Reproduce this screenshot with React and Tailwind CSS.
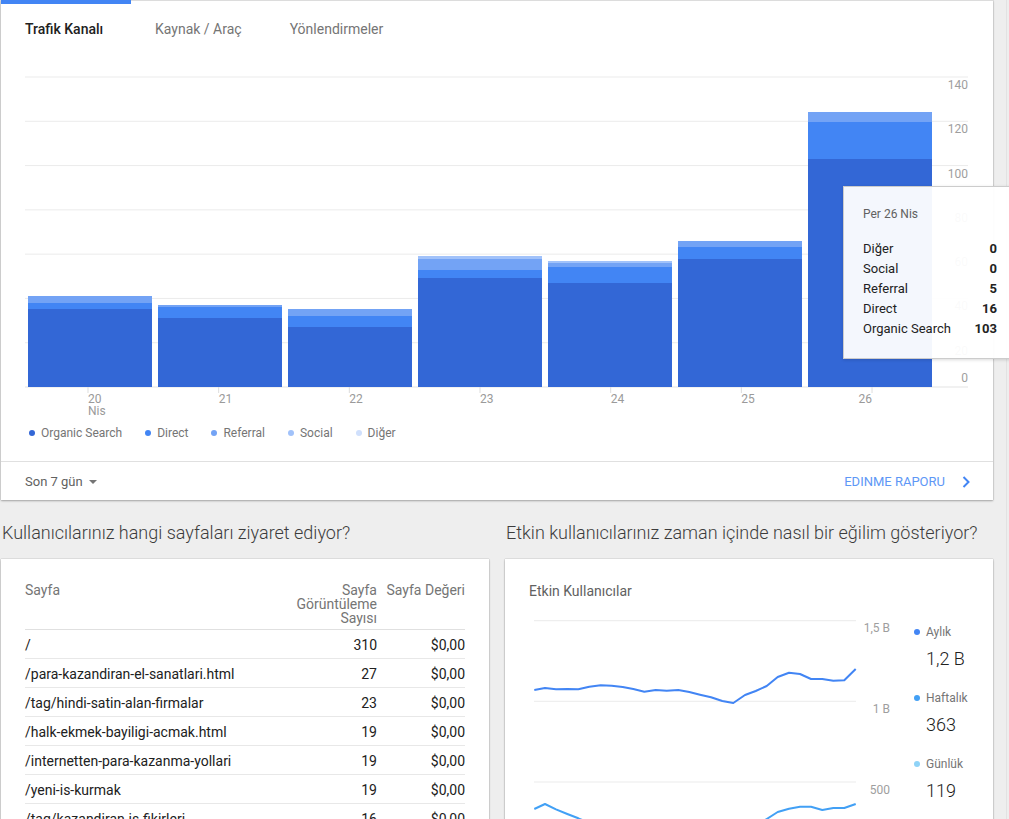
import React from "react";

const C = {
  organic: "#3367d6",
  direct: "#4285f4",
  referral: "#73a3f5",
  social: "#a1c2fa",
  diger: "#d0e0fc",
};

const segColors = [C.organic, C.direct, C.referral, C.social];

const bars = [
  [309, 303, 296],
  [318, 307, 305],
  [327, 316, 309],
  [278, 270, 259, 256],
  [283, 267, 263, 261],
  [259, 247, 241],
  [159, 122, 112],
];

const BASE = 387;
const STEP = 44.286;

function TrafficChart() {
  const grid = [0, 1, 2, 3, 4, 5, 6, 7];
  return (
    <svg width="992" height="362" className="block" fontFamily="Roboto, sans-serif">
      <g transform="translate(-1 -58)">
        {grid.map((k) => (
          <line
            key={k}
            x1="25"
            x2="968"
            y1={BASE - STEP * k}
            y2={BASE - STEP * k}
            stroke={k === 0 ? "#e3e3e3" : "#ebebeb"}
            strokeWidth="1"
          />
        ))}
        {grid.map((k) => (
          <text
            key={"l" + k}
            x="968"
            y={k === 0 ? 382 : BASE - STEP * k + 12}
            textAnchor="end"
            fontSize="12"
            fill="#9e9e9e"
          >
            {k * 20}
          </text>
        ))}
        {bars.map((tops, i) => {
          const x = 28 + 130 * i;
          return (
            <g key={i}>
              {tops.map((t, k) => {
                const bottom = k === 0 ? BASE : tops[k - 1];
                return (
                  <rect key={k} x={x} y={t} width="124" height={bottom - t} fill={segColors[k]} />
                );
              })}
            </g>
          );
        })}
        {[0, 1, 2, 3, 4, 5, 6].map((i) => (
          <line
            key={"t" + i}
            x1={88 + 130.67 * i}
            x2={88 + 130.67 * i}
            y1="387"
            y2="393"
            stroke="#dddddd"
          />
        ))}
        {["20", "21", "22", "23", "24", "25"].map((d, i) => (
          <text key={d} x={88 + 130.67 * i} y="403" fontSize="12" fill="#9a9a9a">
            {d}
          </text>
        ))}
        <text x="872" y="403" fontSize="12" fill="#9a9a9a" textAnchor="end">
          26
        </text>
        <text x="88" y="415" fontSize="12" fill="#9a9a9a">
          Nis
        </text>
      </g>
    </svg>
  );
}

function Legend() {
  const items = [
    ["Organic Search", "bg-[#3367d6]"],
    ["Direct", "bg-[#4285f4]"],
    ["Referral", "bg-[#73a3f5]"],
    ["Social", "bg-[#a1c2fa]"],
    ["Diğer", "bg-[#d0e0fc]"],
  ];
  return (
    <div className="flex items-center gap-[23px] pl-[28px] pt-[5px] pb-[20px]">
      {items.map(([t, c]) => (
        <div key={t} className="flex items-center gap-[6px]">
          <span className={"w-[6px] h-[6px] rounded-full " + c} />
          <span className="text-[12px] leading-[16px] text-[#757575]">{t}</span>
        </div>
      ))}
    </div>
  );
}

function TopCard() {
  return (
    <div className="w-[992px] bg-white shadow-[0_1px_2px_rgba(0,0,0,0.28),0_0_1px_rgba(0,0,0,0.3)]">
      <div className="flex h-[58px]">
        <div className="w-[130px] border-t-[4px] border-[#4285f4] pl-[24px] pt-[15px] text-[14px] leading-[20px] font-medium text-[#212121]">
          Trafik Kanalı
        </div>
        <div className="border-t border-[#dcdcdc] px-[24px] pt-[18px] text-[14px] leading-[20px] text-[#757575]">
          Kaynak / Araç
        </div>
        <div className="border-t border-[#dcdcdc] px-[24px] pt-[18px] text-[14px] leading-[20px] text-[#757575]">
          Yönlendirmeler
        </div>
        <div className="flex-1 border-t border-[#dcdcdc]" />
      </div>
      <TrafficChart />
      <Legend />
      <div className="flex h-[39px] items-center justify-between border-t border-[#e0e0e0] pl-[24px] pr-[23px] pt-[2px]">
        <div className="flex items-center gap-[6px] text-[13px] text-[#616161]">
          <span>Son 7 gün</span>
          <svg width="8" height="4" viewBox="0 0 8 4">
            <polygon points="0,0 8,0 4,4" fill="#757575" />
          </svg>
        </div>
        <div className="flex items-center gap-[17px]">
          <span className="text-[13px] text-[#5e97f6] uppercase">Edinme Raporu</span>
          <svg width="8" height="12" viewBox="0 0 8 12">
            <path d="M1.5 1 L6.5 6 L1.5 11" fill="none" stroke="#4285f4" strokeWidth="2" />
          </svg>
        </div>
      </div>
    </div>
  );
}

const rows = [
  ["/", "310", "$0,00"],
  ["/para-kazandiran-el-sanatlari.html", "27", "$0,00"],
  ["/tag/hindi-satin-alan-firmalar", "23", "$0,00"],
  ["/halk-ekmek-bayiligi-acmak.html", "19", "$0,00"],
  ["/internetten-para-kazanma-yollari", "19", "$0,00"],
  ["/yeni-is-kurmak", "19", "$0,00"],
  ["/tag/kazandiran-is-fikirleri", "16", "$0,00"],
];

function PagesCard() {
  return (
    <div className="h-[280px] bg-white shadow-[0_1px_2px_rgba(0,0,0,0.28),0_0_1px_rgba(0,0,0,0.3)] px-[24px] pt-[24px]">
      <div className="flex border-b border-[#e0e0e0] pb-[4px] text-[14px] leading-[14px] text-[#757575]">
        <div className="flex-1">Sayfa</div>
        <div className="w-[90px] text-right">Sayfa Görüntüleme Sayısı</div>
        <div className="w-[88px] text-right">Sayfa Değeri</div>
      </div>
      {rows.map((r, i) => (
        <div
          key={i}
          className="flex h-[29px] items-center border-b border-[#e8e8e8] pt-[2px] text-[14px] text-[#212121]"
        >
          <div className="flex-1">{r[0]}</div>
          <div className="w-[90px] text-right">{r[1]}</div>
          <div className="w-[88px] text-right">{r[2]}</div>
        </div>
      ))}
    </div>
  );
}

const line1 = [
  [534.3, 690], [545, 688], [556, 689.3], [567.3, 689], [578.3, 689.3], [589.3, 686.7],
  [600.7, 685.3], [611.7, 685.7], [622.7, 687], [633.3, 689], [644.3, 691.7], [655.7, 690],
  [666.7, 690.7], [678.3, 690], [689.3, 692], [700, 694.7], [711, 697.3], [722.3, 701],
  [733.3, 703], [745, 695], [755.7, 691], [766.7, 686], [777.7, 677], [789, 672.7],
  [800, 674], [811, 679], [822.3, 679], [833.3, 680.7], [844.3, 680.3], [855.7, 669],
];

const line2 = [
  [534.3, 809], [545, 804], [556, 809.3], [567.3, 814], [578.3, 818.3], [589.3, 823],
  [611.7, 832], [633.3, 838], [666.7, 842], [700, 842], [733.3, 836], [755.7, 826],
  [766.7, 819], [777.7, 812], [789, 808.7], [800, 806.7], [811, 806.7], [822.3, 810],
  [833.3, 808], [844.3, 808], [855.7, 804],
];

function ActiveChart() {
  const pts = (a) => a.map((p) => p.join(",")).join(" ");
  return (
    <svg width="371" height="200" className="block overflow-visible shrink-0" fontFamily="Roboto, sans-serif">
      <g transform="translate(-529 -624)">
        {[620.7, 701.3, 782].map((y) => (
          <line key={y} x1="534" x2="856" y1={y} y2={y} stroke="#ebebeb" />
        ))}
        <text x="890" y="632" textAnchor="end" fontSize="12" fill="#9e9e9e">1,5 B</text>
        <text x="890" y="713" textAnchor="end" fontSize="12" fill="#9e9e9e">1 B</text>
        <text x="890" y="794" textAnchor="end" fontSize="12" fill="#9e9e9e">500</text>
        <polyline points={pts(line1)} fill="none" stroke="#4285f4" strokeWidth="2" strokeLinejoin="round" />
        <polyline points={pts(line2)} fill="none" stroke="#42a0f5" strokeWidth="2" strokeLinejoin="round" />
      </g>
    </svg>
  );
}

function ActiveCard() {
  const items = [
    ["Aylık", "1,2 B", "bg-[#4285f4]"],
    ["Haftalık", "363", "bg-[#42a0f5]"],
    ["Günlük", "119", "bg-[#8fd3f7]"],
  ];
  return (
    <div className="h-[280px] bg-white shadow-[0_1px_2px_rgba(0,0,0,0.28),0_0_1px_rgba(0,0,0,0.3)] px-[24px] pt-[22px]">
      <div className="text-[14px] leading-[20px] text-[#616161]">Etkin Kullanıcılar</div>
      <div className="mt-[23px] flex">
        <ActiveChart />
        <div className="flex flex-col gap-[19px] pl-[14px]">
          {items.map(([l, v, c]) => (
            <div key={l} className="flex flex-col gap-[7px]">
              <div className="flex items-center gap-[6px]">
                <span className={"w-[6px] h-[6px] rounded-full " + c} />
                <span className="text-[12px] leading-[16px] text-[#757575]">{l}</span>
              </div>
              <div className="pl-[12px] text-[18px] leading-[24px] font-light text-[#212121]">{v}</div>
            </div>
          ))}
        </div>
      </div>
    </div>
  );
}

function Tooltip() {
  const t = [
    ["Diğer", "0"],
    ["Social", "0"],
    ["Referral", "5"],
    ["Direct", "16"],
    ["Organic Search", "103"],
  ];
  return (
    <div className="absolute left-[843px] top-[186px] w-[170px] h-[173px] border border-[#cccccc] bg-white/95 shadow-[0_1px_3px_rgba(0,0,0,0.15)] pl-[19px] pr-[15px] pt-[19px]">
      <div className="text-[12px] leading-[16px] text-[#616161]">Per 26 Nis</div>
      <div className="mt-[17px] grid grid-cols-[1fr_auto] text-[13px] leading-[20px] text-[#222222]">
        {t.map(([a, b]) => (
          <React.Fragment key={a}>
            <div>{a}</div>
            <div className="text-right font-bold">{b}</div>
          </React.Fragment>
        ))}
      </div>
    </div>
  );
}

export default function App() {
  return (
    <div className="relative flex w-[1009px] h-[819px] overflow-hidden bg-[#eeeeee] font-[family-name:Roboto,sans-serif]">
      <div className="w-[1006px] shrink-0 pl-[1px]">
        <TopCard />
        <div className="grid grid-cols-[488px_488px] gap-x-[16px]">
          <div>
            <div className="h-[59px] pt-[23px] pl-[1px] text-[18px] leading-[20px] font-light text-[#3c3c3c]">
              Kullanıcılarınız hangi sayfaları ziyaret ediyor?
            </div>
            <PagesCard />
          </div>
          <div>
            <div className="h-[59px] pt-[23px] pl-[1px] text-[18px] leading-[20px] font-light text-[#3c3c3c]">
              Etkin kullanıcılarınız zaman içinde nasıl bir eğilim gösteriyor?
            </div>
            <ActiveCard />
          </div>
        </div>
      </div>
      <div className="flex-1 border-l border-[#e2e2e2]" />
      <Tooltip />
    </div>
  );
}
